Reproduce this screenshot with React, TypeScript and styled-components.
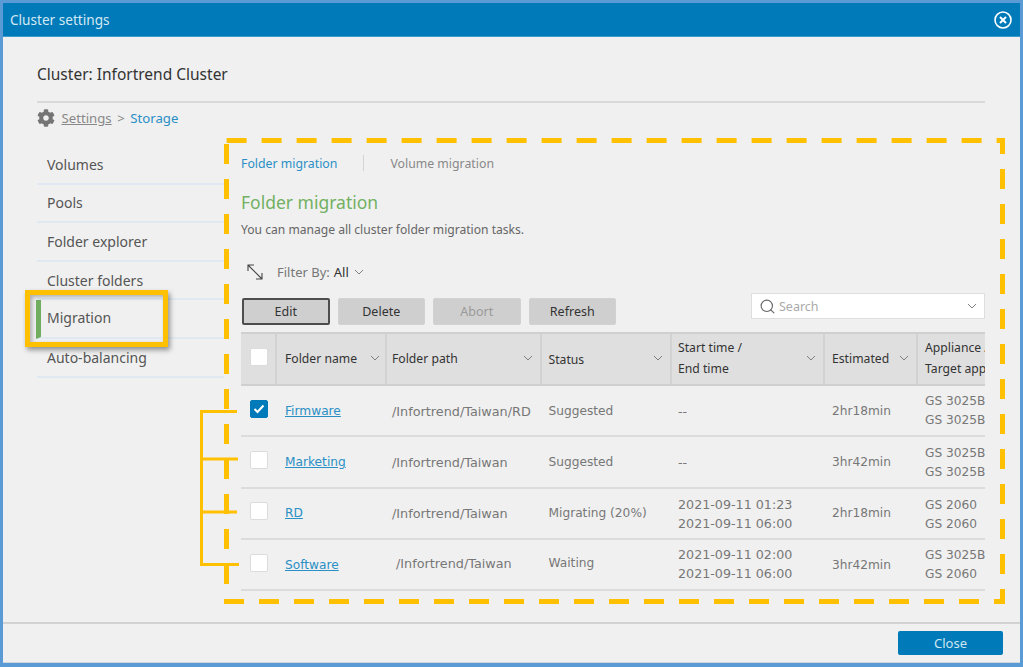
import React from 'react';
import styled, { createGlobalStyle } from 'styled-components';
import { FaCog } from 'react-icons/fa';
import { Search as SearchIcon } from 'lucide-react';

const GlobalStyle = createGlobalStyle`
  html, body {
    margin: 0;
    padding: 0;
    background: #f0f0f0;
  }
  * {
    box-sizing: border-box;
  }
`

const Window = styled.div`
  position: relative;
  width: 1023px;
  height: 667px;
  overflow: hidden;
  display: flex;
  flex-direction: column;
  border: 3px solid #5b9bd5;
  border-bottom-width: 4px;
  background: #f0f0f0;
  font-family: "Noto Sans", "Open Sans", sans-serif;
  color: #555;
`

const TitleBar = styled.div`
  height: 34px;
  flex: none;
  display: flex;
  align-items: center;
  justify-content: space-between;
  padding: 0 8px 0 7px;
  background: #007ab8;
  border-bottom: 1px solid #3d9bcb;
  color: #d5e9f4;
  font-size: 13.6px;
`

const Body = styled.div`
  flex: 1;
  min-height: 0;
  padding: 25px 35px 0 34px;
`

const Heading = styled.div`
  height: 41px;
  border-bottom: 2px solid #d9d9d9;
  font-size: 15.5px;
  line-height: 24px;
  color: #333;
`

const Breadcrumb = styled.div`
  height: 32px;
  display: flex;
  align-items: center;
  gap: 5.5px;
  padding-bottom: 2px;
  font-size: 13.2px;
  color: #888;
  svg {
    width: 18px;
    height: 18px;
    margin-right: 1px;
    color: #757575;
  }
`

const CrumbLink = styled.span`
  text-decoration: underline;
`

const CrumbCurrent = styled.span`
  color: #2a8fc5;
`

const Columns = styled.div`
  display: flex;
`

const Sidebar = styled.div`
  width: 187px;
  flex: none;
  padding-top: 11px;
`

const SideItem = styled.div<{ $active?: boolean }>`
  height: 38.6px;
  display: flex;
  align-items: center;
  margin-left: ${props => (props.$active ? '-1px' : '0')};
  padding: ${props => (props.$active ? '0 0 2px 6px' : '0 0 0 10px')};
  border-bottom: 2px solid #e0e9f2;
  border-left: ${props => (props.$active ? '5px solid #70ad5f' : 'none')};
  font-size: 14px;
  color: #555;
`

const Main = styled.div`
  flex: 1;
  min-width: 0;
  padding: 16px 0 0 17px;
`

const Tabs = styled.div`
  display: flex;
  align-items: center;
  height: 24px;
  font-size: 12.3px;
`

const Tab = styled.span<{ $active?: boolean }>`
  color: ${props => (props.$active ? '#2a8fc5' : '#888')};
`

const TabDivider = styled.span`
  width: 1px;
  height: 16px;
  margin: 0 26px;
  background: #d4d4d4;
`

const PageTitle = styled.div`
  margin-top: 14px;
  font-size: 17.5px;
  line-height: 26px;
  color: #72b062;
`

const PageNote = styled.div`
  margin-top: 6px;
  font-size: 12.1px;
  line-height: 18px;
  color: #666;
`

const FilterRow = styled.div`
  display: flex;
  align-items: center;
  height: 24px;
  margin-top: 21px;
  padding-left: 5px;
  font-size: 13px;
  color: #777;
`

const FilterValue = styled.span`
  margin: 0 5px 0 3px;
  color: #333;
`

const FilterLabel = styled.span`
  margin-right: 1px;
`

const Toolbar = styled.div`
  display: flex;
  align-items: flex-start;
  justify-content: space-between;
  height: 38px;
  margin-top: 10px;
`

const Buttons = styled.div`
  display: flex;
  gap: 8px;
  padding: 3.5px 0 0 1px;
`

const Button = styled.div<{ $selected?: boolean; $disabled?: boolean }>`
  width: 87.5px;
  height: 27px;
  display: flex;
  align-items: center;
  justify-content: center;
  border-radius: 2px;
  border: ${props => (props.$selected ? '2px solid #4d4d4d' : '1px solid #d2d2d2')};
  background: #cfcfcf;
  font-size: 12.5px;
  color: ${props => (props.$disabled ? '#9a9a9a' : '#333')};
`

const SearchBox = styled.div`
  width: 234px;
  height: 26px;
  margin-top: -1px;
  display: flex;
  align-items: center;
  gap: 3px;
  padding: 0 7px 0 7px;
  background: #fff;
  border: 1px solid #dedede;
  font-size: 12.5px;
  color: #aaa;
  span {
    flex: 1;
  }
`

const Table = styled.div`
  overflow: hidden;
  width: 744px;
`

const Row = styled.div<{ $head?: boolean }>`
  display: grid;
  grid-template-columns: 34px 110px 154.5px 130.5px 153px 93px 160px;
  height: ${props => (props.$head ? '54px' : '51.3px')};
  background: ${props => (props.$head ? '#dfdfdf' : 'transparent')};
  border-top: ${props => (props.$head ? '2px solid #cfcfcf' : 'none')};
  border-bottom: 2px solid ${props => (props.$head ? '#cfcfcf' : '#dcdcdc')};
`

const HeadCell = styled.div<{ $inset?: number; $end?: number }>`
  display: flex;
  align-items: center;
  justify-content: space-between;
  padding: 0 ${props => props.$end ?? 7}px 2px ${props => props.$inset ?? 7}px;
  border-left: 2px solid #d2d2d2;
  font-size: 12.2px;
  line-height: 21px;
  color: #333;
  white-space: nowrap;
`

const HeadCheckCell = styled.div`
  display: flex;
  align-items: center;
  padding: 0 0 4px 9px;
`

const HeadStatus = styled.span`
  padding-top: 2px;
`

const Cell = styled.div<{ $inset?: number; $size?: number; $drop?: number; $lift?: number }>`
  display: flex;
  flex-direction: column;
  justify-content: center;
  padding-left: ${props => props.$inset ?? 9}px;
  padding-top: ${props => props.$drop ?? 1}px;
  padding-bottom: ${props => props.$lift ?? 0}px;
  font-family: "DejaVu Sans", Verdana, sans-serif;
  font-size: ${props => props.$size ?? 12.2}px;
  line-height: 19px;
  color: #777;
  white-space: nowrap;
`

const CheckCell = styled.div`
  display: flex;
  align-items: center;
  padding: 0 0 4px 9px;
`

const FolderLink = styled.a`
  color: #2a8fc5;
  text-decoration: underline;
`

const Check = styled.span<{ $checked?: boolean }>`
  width: 18px;
  height: 18px;
  display: flex;
  align-items: center;
  justify-content: center;
  border-radius: 2px;
  border: 1px solid ${props => (props.$checked ? '#007ab8' : '#dcdcdc')};
  background: ${props => (props.$checked ? '#007ab8' : '#fff')};
`

const Footer = styled.div`
  position: absolute;
  left: 0;
  right: 0;
  bottom: 0;
  height: 41px;
  display: flex;
  align-items: center;
  justify-content: flex-end;
  padding: 0 17px 1px 0;
  border-top: 2px solid #d2d2d2;
  border-bottom: 1px solid #cfd6dc;
`

const CloseButton = styled.div`
  width: 105px;
  height: 24px;
  display: flex;
  align-items: center;
  justify-content: center;
  border-radius: 2px;
  background: #007ab8;
  font-size: 13px;
  color: #cfe6f2;
`

const Annotation = styled.svg`
  position: absolute;
  left: -3px;
  top: -3px;
  pointer-events: none;
`

const Highlight = styled.div`
  position: absolute;
  left: 22px;
  top: 287px;
  width: 143px;
  height: 57px;
  border: 5px solid #ffc000;
  box-shadow: 2px 3px 5px rgba(0, 0, 0, 0.4), inset 2px 2px 4px rgba(0, 0, 0, 0.28);
  pointer-events: none;
`

const Chevron = () => (
  <svg width="10" height="6" viewBox="0 0 10 6" fill="none" stroke="#808080" strokeWidth="1">
    <path d="M1 1l4 4 4-4" />
  </svg>
)

const Resize = () => (
  <svg width="18" height="18" viewBox="0 0 18 18" fill="none" stroke="#444" strokeWidth="1.1" style={{ marginRight: 13 }}>
    <path d="M2 2l14 14M2 8V2h6M16 10v6h-6" />
  </svg>
)

const CloseIcon = () => (
  <svg width="18" height="18" viewBox="0 0 18 18" fill="none" stroke="#fff">
    <circle cx="9" cy="9" r="8" strokeWidth="1.6" />
    <path d="M6 6l6 6M12 6l-6 6" strokeWidth="2" />
  </svg>
)

const CheckMark = () => (
  <svg width="12" height="10" viewBox="0 0 12 10" fill="none" stroke="#fff" strokeWidth="2">
    <path d="M1.5 5l3 3 6-6.5" />
  </svg>
)

const tasks = [
  { name: 'Firmware', path: '/Infortrend/Taiwan/RD', status: 'Suggested', times: ['--'], est: '2hr18min', target: ['GS 3025B', 'GS 3025B'], checked: true },
  { name: 'Marketing', path: '/Infortrend/Taiwan', status: 'Suggested', times: ['--'], est: '3hr42min', target: ['GS 3025B', 'GS 3025B'], targetDrop: 3 },
  { name: 'RD', path: '/Infortrend/Taiwan', status: 'Migrating (20%)', times: ['2021-09-11 01:23', '2021-09-11 06:00'], est: '2hr18min', target: ['GS 2060', 'GS 2060'], targetDrop: 3 },
  { name: 'Software', path: '/Infortrend/Taiwan', status: 'Waiting', times: ['2021-09-11 02:00', '2021-09-11 06:00'], est: '3hr42min', target: ['GS 3025B', 'GS 2060'], inset: 11, lift: 3 },
]

const sideItems = ['Volumes', 'Pools', 'Folder explorer', 'Cluster folders', 'Migration', 'Auto-balancing']

const App = () => (
  <Window>
    <GlobalStyle />
    <TitleBar>
      <span>Cluster settings</span>
      <CloseIcon />
    </TitleBar>
    <Body>
      <Heading>Cluster: Infortrend Cluster</Heading>
      <Breadcrumb>
        <FaCog />
        <CrumbLink>Settings</CrumbLink>
        <span>&gt;</span>
        <CrumbCurrent>Storage</CrumbCurrent>
      </Breadcrumb>
      <Columns>
        <Sidebar>
          {sideItems.map(item => (
            <SideItem key={item} $active={item === 'Migration'}>{item}</SideItem>
          ))}
        </Sidebar>
        <Main>
          <Tabs>
            <Tab $active>Folder migration</Tab>
            <TabDivider />
            <Tab>Volume migration</Tab>
          </Tabs>
          <PageTitle>Folder migration</PageTitle>
          <PageNote>You can manage all cluster folder migration tasks.</PageNote>
          <FilterRow>
            <Resize />
            <FilterLabel>Filter By:</FilterLabel>
            <FilterValue>All</FilterValue>
            <Chevron />
          </FilterRow>
          <Toolbar>
            <Buttons>
              <Button $selected>Edit</Button>
              <Button>Delete</Button>
              <Button $disabled>Abort</Button>
              <Button>Refresh</Button>
            </Buttons>
            <SearchBox>
              <SearchIcon size={17} color="#666" strokeWidth={1.6} />
              <span>Search</span>
              <Chevron />
            </SearchBox>
          </Toolbar>
          <Table>
            <Row $head>
              <HeadCheckCell><Check /></HeadCheckCell>
              <HeadCell $inset={8} $end={5}><span>Folder name</span><Chevron /></HeadCell>
              <HeadCell $inset={5}><span>Folder path</span><Chevron /></HeadCell>
              <HeadCell><HeadStatus>Status</HeadStatus><Chevron /></HeadCell>
              <HeadCell $inset={6}><span>Start time /<br />End time</span><Chevron /></HeadCell>
              <HeadCell><span>Estimated</span><Chevron /></HeadCell>
              <HeadCell><span>Appliance /<br />Target appliance</span></HeadCell>
            </Row>
            {tasks.map(task => (
              <Row key={task.name}>
                <CheckCell>
                  <Check $checked={task.checked}>{task.checked && <CheckMark />}</Check>
                </CheckCell>
                <Cell $inset={10}><span><FolderLink>{task.name}</FolderLink></span></Cell>
                <Cell $inset={task.inset ?? 7} $size={12.8} $lift={task.lift}>{task.path}</Cell>
                <Cell $lift={task.lift}>{task.status}</Cell>
                <Cell $inset={8} $size={12.7} $drop={2} $lift={task.lift}>{task.times.map(t => <span key={t}>{t}</span>)}</Cell>
                <Cell>{task.est}</Cell>
                <Cell $drop={task.targetDrop}>{task.target.map((t, k) => <span key={k}>{t}</span>)}</Cell>
              </Row>
            ))}
          </Table>
        </Main>
      </Columns>
    </Body>
    <Footer>
      <CloseButton>Close</CloseButton>
    </Footer>
    <Highlight />
    <Annotation width="1023" height="667" viewBox="0 0 1023 667" fill="none" stroke="#ffc000">
      <g strokeWidth="5" strokeDasharray="20 15">
        <path d="M226.6 140.5H1005" />
        <path d="M226.5 144V584" />
        <path d="M224 601.5H1005" />
        <path d="M1002.5 138V604" strokeDashoffset="4" />
      </g>
      <path d="M201.5 411.5V564.5M200 411.5H237M200 459H238M200 512H237M200 564.5H239" strokeWidth="3" />
    </Annotation>
  </Window>
);

export default App;
